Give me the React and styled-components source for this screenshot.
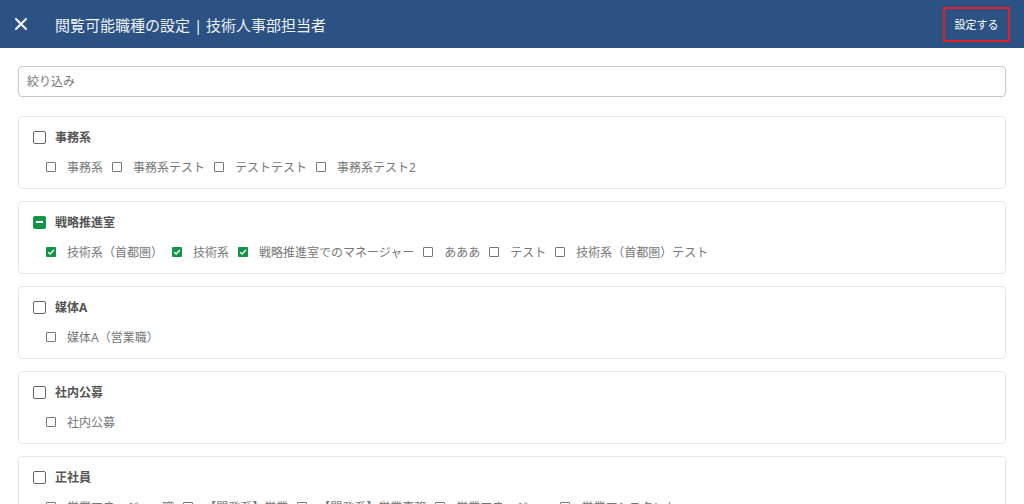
import React from 'react'
import styled, { createGlobalStyle } from 'styled-components'

const groups = [
  {
    name: '事務系',
    state: 'none',
    items: [
      { label: '事務系' },
      { label: '事務系テスト' },
      { label: 'テストテスト' },
      { label: '事務系テスト2' },
    ],
  },
  {
    name: '戦略推進室',
    state: 'partial',
    items: [
      { label: '技術系（首都圏）', checked: true },
      { label: '技術系', checked: true },
      { label: '戦略推進室でのマネージャー', checked: true },
      { label: 'あああ' },
      { label: 'テスト' },
      { label: '技術系（首都圏）テスト' },
    ],
  },
  { name: '媒体A', state: 'none', items: [{ label: '媒体A（営業職）' }] },
  { name: '社内公募', state: 'none', items: [{ label: '社内公募' }] },
  {
    name: '正社員',
    state: 'none',
    items: [
      { label: '営業マネージャー職' },
      { label: '【開発系】営業' },
      { label: '【開発系】営業事務' },
      { label: '営業マネージャー' },
      { label: '営業アシスタント' },
    ],
  },
]

const GlobalStyle = createGlobalStyle`
  html, body {
    margin: 0;
    padding: 0;
    background: #fff;
    font-family: "Noto Sans", "Noto Sans CJK JP", sans-serif;
  }
  body { overflow: hidden; }
`

const App = () => {
  return (
    <>
      <GlobalStyle />
      <StHeader>
        <StClose>
          <svg width="14" height="14" viewBox="0 0 14 14">
            <path d="M2 2 L12 12 M12 2 L2 12" stroke="#fff" strokeWidth="2" strokeLinecap="round" />
          </svg>
        </StClose>
        <StTitle>閲覧可能職種の設定 | 技術人事部担当者</StTitle>
        <StSubmit>設定する</StSubmit>
      </StHeader>
      <StBody>
        <StSearch placeholder="絞り込み" />
        {groups.map((g) => (
          <StCard key={g.name}>
            <StGroupRow>
              <StGroupBox $state={g.state}>
                {g.state === 'partial' && <StDash />}
              </StGroupBox>
              <StGroupLabel>{g.name}</StGroupLabel>
            </StGroupRow>
            <StItemRow>
              {g.items.map((it) => (
                <StItem key={it.label}>
                  <StItemBox $checked={it.checked}>
                    {it.checked && (
                      <svg width="8" height="8" viewBox="0 0 8 8">
                        <path d="M1.2 4.2 L3.2 6 L6.8 2" stroke="#fff" strokeWidth="1.4" fill="none" />
                      </svg>
                    )}
                  </StItemBox>
                  <StItemLabel>{it.label}</StItemLabel>
                </StItem>
              ))}
            </StItemRow>
          </StCard>
        ))}
      </StBody>
    </>
  )
}

export default App

const StHeader = styled.header`
  height: 48px;
  background-color: #2b5283;
  display: flex;
  align-items: center;
  padding: 0 14px 0 14px;
  box-sizing: border-box;
`

const StClose = styled.div`
  width: 14px;
  height: 14px;
  display: flex;
  margin-right: 27px;
`

const StTitle = styled.h1`
  flex: 1;
  margin: 0;
  color: #eef2f7;
  font-size: 15px;
  font-weight: 400;
  letter-spacing: 0;
`

const StSubmit = styled.button`
  width: 67px;
  height: 35px;
  border: 2px solid #e3202a;
  background: transparent;
  color: #fff;
  font-size: 11px;
  font-family: inherit;
  padding: 0;
  margin-top: 0;
`

const StBody = styled.main`
  padding: 18px 18px 0;
  display: flex;
  flex-direction: column;
  gap: 12px;
`

const StSearch = styled.input`
  height: 31px;
  border: 1px solid #c8c8c8;
  border-radius: 4px;
  padding: 0 8px;
  font-family: inherit;
  font-size: 12px;
  margin-bottom: 7px;
  box-sizing: border-box;
  &::placeholder {
    color: #777;
  }
`

const StCard = styled.section`
  border: 1px solid #e8e8e8;
  border-radius: 4px;
  padding: 13px 14px 16px;
  display: flex;
  flex-direction: column;
  gap: 14px;
  flex-shrink: 0;
`

const StGroupRow = styled.div`
  display: flex;
  align-items: center;
  gap: 9px;
  height: 14px;
`

const StGroupBox = styled.span`
  width: 13px;
  height: 13px;
  box-sizing: border-box;
  border-radius: 2px;
  border: ${(p) => (p.$state === 'partial' ? 'none' : '1.6px solid #666')};
  background: ${(p) => (p.$state === 'partial' ? '#139447' : '#fff')};
  display: flex;
  align-items: center;
  justify-content: center;
`

const StDash = styled.span`
  width: 7px;
  height: 2px;
  background: #fff;
`

const StGroupLabel = styled.span`
  font-size: 12px;
  font-weight: 700;
  color: #555;
`

const StItemRow = styled.div`
  display: flex;
  flex-wrap: wrap;
  padding-left: 13px;
  gap: 9px;
  height: 14px;
`

const StItem = styled.label`
  display: flex;
  align-items: center;
  gap: 11px;
`

const StItemBox = styled.span`
  width: 10px;
  height: 10px;
  box-sizing: border-box;
  border-radius: 1px;
  border: ${(p) => (p.$checked ? 'none' : '1.3px solid #777')};
  background: ${(p) => (p.$checked ? '#139447' : '#fff')};
  display: flex;
  align-items: center;
  justify-content: center;
`

const StItemLabel = styled.span`
  font-size: 12px;
  color: #777;
`
